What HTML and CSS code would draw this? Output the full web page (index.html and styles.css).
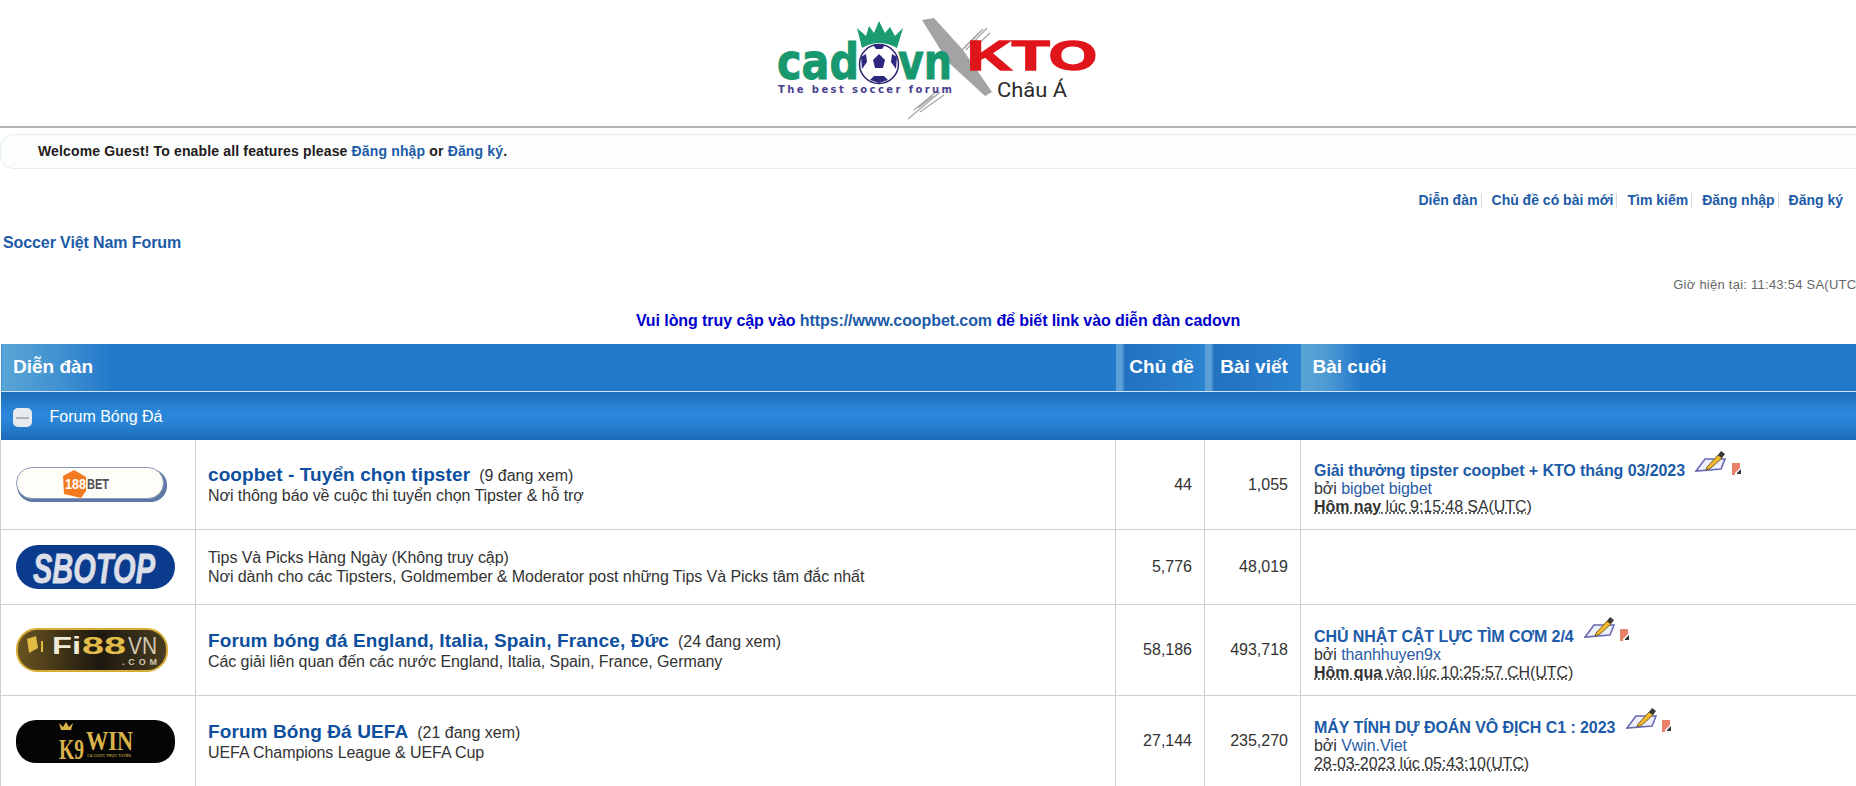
FILE: index.html
```html
<!DOCTYPE html>
<html lang="vi">
<head>
<meta charset="utf-8">
<title>Soccer Việt Nam Forum</title>
<link rel="stylesheet" href="styles.css">
</head>
<body>
<header class="banner">
  <svg class="site-logo" viewBox="0 0 340 126" width="340" height="126" role="img" aria-label="cadovn x KTO Châu Á">
    <path d="M164 20 L176 18 L205 50 L234 92 L227 96 L190 62 Z" fill="#a3a3a3"/>
    <g fill="none" stroke="#a5a5a5" stroke-width="1.2">
      <path d="M229 28 L208 50"/><path d="M225 29 L206 48"/><path d="M232 33 L214 50"/><path d="M221 33 L204 50"/>
      <path d="M182 92 L150 119"/><path d="M178 92 L156 110"/><path d="M186 95 L162 112"/><path d="M175 96 L160 108"/>
    </g>
    <path d="M104 48 L99 28 L108 36 L111 26 L116 33 L121 21 L127 33 L132 27 L137 36 L145 28 L139 48 Q121 38 104 48 Z" fill="#1a9b72"/>
    <text x="19" y="79" class="logo-cad" textLength="82" lengthAdjust="spacingAndGlyphs">cad</text>
    <circle cx="121" cy="64" r="19.5" fill="#fff" stroke="#2a2370" stroke-width="1.5"/>
    <g fill="#2e2780">
      <path d="M121 54 L127 60 L125 68 L117 68 L115 60 Z"/>
      <path d="M115 45 L127 45 L124 49 L118 49 Z"/>
      <path d="M103 57 L108 54 L109 62 L104 69 Z"/>
      <path d="M139 57 L134 54 L133 62 L138 69 Z"/>
      <path d="M112 80 L116 76 L126 76 L130 80 L121 83 Z"/>
    </g>
    <text x="140" y="79" class="logo-cad" textLength="54" lengthAdjust="spacingAndGlyphs">vn</text>
    <text x="20" y="93" class="logo-tag" textLength="174">The best soccer forum</text>
    <text x="209" y="70" class="logo-kto" textLength="130" lengthAdjust="spacingAndGlyphs">KTO</text>
    <text x="239" y="97" class="logo-chau" textLength="70" lengthAdjust="spacingAndGlyphs">Châu Á</text>
  </svg>
</header>
<hr class="rule">
<div class="welcome">Welcome Guest! To enable all features please <a href="#">Đăng nhập</a> or <a href="#">Đăng ký</a>.</div>
<nav class="topnav">
  <a href="#">Diễn đàn</a><a href="#">Chủ đề có bài mới</a><a href="#">Tìm kiếm</a><a href="#">Đăng nhập</a><a href="#">Đăng ký</a>
</nav>
<div class="crumb"><a href="#">Soccer Việt Nam Forum</a></div>
<div class="clock">Giờ hiện tại: 11:43:54 SA(UTC)</div>
<div class="notice">Vui lòng truy cập vào <a href="#">https://www.coopbet.com</a> để biết link vào diễn đàn cadovn</div>
<table class="forum">
  <colgroup>
    <col class="c-icon"><col class="c-name"><col class="c-num1"><col class="c-num2"><col class="c-last">
  </colgroup>
  <thead>
    <tr class="head">
      <th colspan="2">Diễn đàn</th>
      <th class="center">Chủ đề</th>
      <th class="center">Bài viết</th>
      <th>Bài cuối</th>
    </tr>
  </thead>
  <tbody>
    <tr class="cat">
      <td colspan="5"><span class="collapse"><span class="collapse-bar"></span></span>Forum Bóng Đá</td>
    </tr>
    <tr class="tall first">
      <td class="ico">
        <svg class="badge" viewBox="0 0 151 35" width="151" height="35" role="img" aria-label="188BET">
          <rect x="1" y="2" width="150" height="33" rx="16" fill="#5f78a6"/>
          <rect x="0.5" y="0.5" width="147" height="31" rx="15.5" fill="#fffdf7" stroke="#8a9ab8"/>
          <path d="M47 9 L58 3 L70 10 L70 24 L65 31 L48 27 Z" fill="#f47a20"/>
          <text x="49" y="22" class="b-188" textLength="21" lengthAdjust="spacingAndGlyphs">188</text>
          <text x="71" y="22" class="b-bet" textLength="22" lengthAdjust="spacingAndGlyphs">BET</text>
        </svg>
      </td>
      <td><a class="title" href="#">coopbet - Tuyển chọn tipster</a><span class="views">(9 đang xem)</span><div class="desc">Nơi thông báo về cuộc thi tuyển chọn Tipster &amp; hỗ trợ</div></td>
      <td class="num">44</td>
      <td class="num">1,055</td>
      <td class="last">
        <div class="last-title"><a href="#">Giải thưởng tipster coopbet + KTO tháng 03/2023</a>
          <svg class="pencil" viewBox="0 0 31 22" width="31" height="22" aria-hidden="true"><use href="#i-pencil"/></svg>
          <svg class="jump" viewBox="0 0 10 12" width="10" height="12" aria-hidden="true"><use href="#i-jump"/></svg></div>
        <div>bởi <a class="user" href="#">bigbet bigbet</a></div>
        <div><span class="stamp"><b>Hôm nay</b> lúc 9:15:48 SA(UTC)</span></div>
      </td>
    </tr>
    <tr class="short">
      <td class="ico">
        <svg class="badge" viewBox="0 0 159 44" width="159" height="44" role="img" aria-label="SBOTOP">
          <rect x="0" y="0" width="159" height="44" rx="22" fill="#0b3b8c"/>
          <text x="17" y="38" class="b-sbo" textLength="122" lengthAdjust="spacingAndGlyphs">SBOTOP</text>
        </svg>
      </td>
      <td class="plain"><div>Tips Và Picks Hàng Ngày (Không truy cập)</div><div class="desc">Nơi dành cho các Tipsters, Goldmember &amp; Moderator post những Tips Và Picks tâm đắc nhất</div></td>
      <td class="num">5,776</td>
      <td class="num">48,019</td>
      <td class="last"></td>
    </tr>
    <tr class="tall">
      <td class="ico">
        <svg class="badge" viewBox="0 0 152 44" width="152" height="44" role="img" aria-label="Fi88VN.com">
          <defs><linearGradient id="g-fi" x1="0" x2="1" y1="0" y2="0"><stop offset="0" stop-color="#6a5420"/><stop offset=".55" stop-color="#1d1810"/><stop offset="1" stop-color="#4a3d20"/></linearGradient></defs>
          <rect x="1" y="1" width="150" height="42" rx="20" fill="url(#g-fi)" stroke="#d7ac34" stroke-width="2"/>
          <path d="M11 11 L20 8 L22 20 L13 25 Z" fill="#e2bb45"/>
          <path d="M25 13 L27 13 L27 24 L25 24 Z" fill="#e2bb45"/>
          <text x="36" y="26" class="b-fi" textLength="29" lengthAdjust="spacingAndGlyphs">Fi</text>
          <text x="66" y="26" class="b-88" textLength="44" lengthAdjust="spacingAndGlyphs">88</text>
          <text x="112" y="26" class="b-vn" textLength="29" lengthAdjust="spacingAndGlyphs">VN</text>
          <text x="106" y="37" class="b-com" textLength="35">.COM</text>
        </svg>
      </td>
      <td><a class="title" href="#">Forum bóng đá England, Italia, Spain, France, Đức</a><span class="views">(24 đang xem)</span><div class="desc">Các giải liên quan đến các nước England, Italia, Spain, France, Germany</div></td>
      <td class="num">58,186</td>
      <td class="num">493,718</td>
      <td class="last">
        <div class="last-title"><a href="#">CHỦ NHẬT CẬT LỰC TÌM CƠM 2/4</a>
          <svg class="pencil" viewBox="0 0 31 22" width="31" height="22" aria-hidden="true"><use href="#i-pencil"/></svg>
          <svg class="jump" viewBox="0 0 10 12" width="10" height="12" aria-hidden="true"><use href="#i-jump"/></svg></div>
        <div>bởi <a class="user" href="#">thanhhuyen9x</a></div>
        <div><span class="stamp"><b>Hôm qua</b> vào lúc 10:25:57 CH(UTC)</span></div>
      </td>
    </tr>
    <tr class="tall">
      <td class="ico">
        <svg class="badge" viewBox="0 0 159 43" width="159" height="43" role="img" aria-label="K9WIN">
          <rect x="0" y="0" width="159" height="43" rx="20" fill="#050505"/>
          <path d="M43 3 L47 7 L50 2 L53 7 L57 3 L55 10 L45 10 Z" fill="#d9b24a"/>
          <text x="43" y="39" class="b-k9" textLength="25" lengthAdjust="spacingAndGlyphs">K9</text>
          <text x="70" y="30" class="b-win" textLength="47" lengthAdjust="spacingAndGlyphs">WIN</text>
          <text x="71" y="37" class="b-tiny" textLength="44" lengthAdjust="spacingAndGlyphs">CÁ CƯỢC TRỰC TUYẾN</text>
        </svg>
      </td>
      <td><a class="title" href="#">Forum Bóng Đá UEFA</a><span class="views">(21 đang xem)</span><div class="desc">UEFA Champions League &amp; UEFA Cup</div></td>
      <td class="num">27,144</td>
      <td class="num">235,270</td>
      <td class="last">
        <div class="last-title"><a href="#">MÁY TÍNH DỰ ĐOÁN VÔ ĐỊCH C1 : 2023</a>
          <svg class="pencil" viewBox="0 0 31 22" width="31" height="22" aria-hidden="true"><use href="#i-pencil"/></svg>
          <svg class="jump" viewBox="0 0 10 12" width="10" height="12" aria-hidden="true"><use href="#i-jump"/></svg></div>
        <div>bởi <a class="user" href="#">Vwin.Viet</a></div>
        <div><span class="stamp">28-03-2023 lúc 05:43:10(UTC)</span></div>
      </td>
    </tr>
  </tbody>
</table>
<svg class="sprites" width="0" height="0" aria-hidden="true">
  <symbol id="i-pencil" viewBox="0 0 31 22">
    <path d="M10 9 L30 9 L26 19 L1 21 Z" fill="#eef0fb" stroke="#6a6ab4" stroke-width="1.6"/>
    <path d="M12 17 L23 5 L27 8 L16 18 L11 20 Z" fill="#f0b92c" stroke="#5a4410" stroke-width=".8"/>
    <path d="M23 5 L26 1 L30 4 L27 8 Z" fill="#3a3630"/>
  </symbol>
  <symbol id="i-jump" viewBox="0 0 10 12">
    <rect x="0" y="0" width="8" height="12" fill="#e8806a"/>
    <path d="M3 10 L9 4 L10 12 L3 12 Z" fill="#fff"/>
    <path d="M5 10 L9 6 L9 11 L5 11 Z" fill="#2f3a3a"/>
  </symbol>
</svg>
</body>
</html>
```
FILE: styles.css
```css
html, body { margin: 0; padding: 0; background: #fff; }
body { font-family: "Liberation Sans", Arial, sans-serif; font-size: 14px; color: #333; height: 786px; overflow: hidden; }
a { color: #1c5ba8; text-decoration: none; }

.banner { height: 126px; display: flex; justify-content: center; }
.site-logo { display: block; }
.logo-cad { font: bold 50px "DejaVu Sans", sans-serif; fill: #18986f; stroke: #18986f; stroke-width: 1px; }
.logo-tag { font: bold 10px "DejaVu Sans", sans-serif; fill: #4a3f8f; }
.logo-kto { font: bold 42px "Liberation Sans", sans-serif; fill: #e0151b; stroke: #e0151b; stroke-width: 1.5px; }
.logo-chau { font: 20px "Roboto", sans-serif; fill: #2a2a2a; }

.rule { height: 2px; border: 0; background: #b5b5b5; margin: 0; }
.welcome { margin-top: 6px; height: 35px; box-sizing: border-box; padding-left: 37px; line-height: 33px; border: 1px solid #e6eef2; border-right: 0; border-radius: 14px 0 0 14px; background: #fcfefe; font-size: 14px; font-weight: bold; color: #231a1a; letter-spacing: .15px; white-space: nowrap; }
.topnav { display: flex; justify-content: flex-end; margin-top: 24px; padding-right: 13px; height: 20px; font-size: 14px; font-weight: bold; }
.topnav a { line-height: 15px; height: 15px; }
.topnav a + a { border-left: 1px solid #d8d8d8; margin-left: 3px; padding-left: 10px; }
.crumb { margin-top: 21px; padding-left: 3px; font-size: 16px; font-weight: bold; letter-spacing: -.1px; line-height: 18px; }
.clock { margin-top: 25px; margin-right: -5px; font-size: 13px; letter-spacing: .25px; color: #666; text-align: right; white-space: nowrap; line-height: 16px; }
.notice { margin-top: 19px; padding-left: 20px; font-size: 16px; font-weight: bold; letter-spacing: -.08px; color: #0000cc; text-align: center; line-height: 18px; }
.notice a { color: #1c5ba8; }

.forum { margin: 14px 0 0; width: 1900px; table-layout: fixed; border-collapse: collapse; }
.c-icon { width: 195px; }
.c-name { width: 920px; }
.c-num1 { width: 89px; }
.c-num2 { width: 96px; }
.head th { height: 45px; padding: 0 12px 2px; text-align: left; font-size: 19px; font-weight: bold; color: #fff; background: linear-gradient(90deg, #5aa5d6 0, #3f90d0 60px, #2379c9 110px); border-bottom: 1px solid #cfe2f2; border-left: 1px solid #fff; }
.head th.center { text-align: center; background: linear-gradient(90deg, #5a9fd6 0, #5a9fd6 6px, #2272bf 9px, #2b82d0 100%); padding: 0 0 2px 3px; border-left: 0; }
.head th:last-child { background: linear-gradient(90deg, #5aa5d6 0, #4e9ad3 25px, #2379c9 60px); border-left: 0; }
.cat td { height: 45px; padding: 3px 0 0 12px; color: #fff; font-size: 16px; background: linear-gradient(180deg, #1f6fbb 0, #2a86d8 40%, #2a85d7 60%, #1c6ab8 100%); }
.collapse { display: inline-flex; align-items: center; justify-content: center; width: 19px; height: 19px; margin-right: 18px; border-radius: 5px; background: #e7ebef; vertical-align: 3px; }
.collapse-bar { display: block; width: 13px; height: 2px; background: #aab2ba; }
tbody td { border: 1px solid #cfcfcf; border-top: 0; }
.cat td { border: 0; }
.tall td { height: 90px; }
.first td { height: 89px; }
.short td { height: 74px; }
.ico { padding: 0 0 0 15px; }
.badge { display: block; }
tbody td:nth-child(2) { padding: 0 12px; line-height: 18px; }
.title { font-size: 19px; font-weight: bold; letter-spacing: .1px; color: #0d4f9e; line-height: 22px; }
.views { margin-left: 9px; font-size: 16px; color: #333; }
.desc { font-size: 16px; letter-spacing: -.07px; color: #333; line-height: 19px; }
.plain div { font-size: 16px; letter-spacing: -.07px; line-height: 19px; }
.num { text-align: right; padding: 0 12px 0 0; font-size: 16px; color: #333; }
.last { box-sizing: border-box; padding: 9px 0 0 13px; font-size: 16px; letter-spacing: -.07px; line-height: 18px; white-space: nowrap; }
.last-title a { font-weight: bold; color: #1c5ba8; }
.pencil { margin: -14px 0 0 6px; vertical-align: 4px; }
.jump { margin: -8px 0 0 1px; vertical-align: 1px; }
.user { color: #2a5ca8; }
.stamp { text-decoration: underline dotted #333; text-underline-offset: 1px; }
.sprites { position: absolute; }

.b-188 { font: bold 14px "Liberation Sans", sans-serif; fill: #fff; }
.b-bet { font: bold 14px "Liberation Sans", sans-serif; fill: #4d4d55; }
.b-sbo { font: italic bold 43px "Liberation Sans", sans-serif; fill: #dcdfe8; stroke: #dcdfe8; stroke-width: .8px; }
.b-fi { font: bold 24px "Liberation Sans", sans-serif; fill: #f1ecd8; }
.b-88 { font: bold 24px "Liberation Sans", sans-serif; fill: #e3bd4a; }
.b-vn { font: 24px "Liberation Sans", sans-serif; fill: #cfc8b0; }
.b-com { font: bold 9px "Liberation Sans", sans-serif; fill: #cfc8b0; }
.b-k9 { font: bold 30px "Liberation Serif", serif; fill: #d9b24a; }
.b-win { font: bold 28px "Liberation Serif", serif; fill: #d9b24a; }
.b-tiny { font: bold 4px "Liberation Sans", sans-serif; fill: #a98a3a; }
```
